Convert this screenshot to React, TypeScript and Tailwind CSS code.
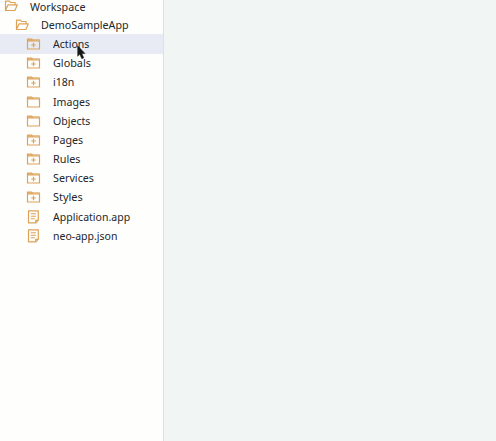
type Kind = "open" | "plus" | "folder" | "file";

interface Item {
  label: string;
  kind: Kind;
  indent: string;
  width: string;
  selected?: boolean;
}

const items: Item[] = [
  { label: "Workspace", kind: "open", indent: "pl-[4px]", width: "scale-x-[0.935]" },
  { label: "DemoSampleApp", kind: "open", indent: "pl-[15px]", width: "scale-x-[0.93]" },
  { label: "Actions", kind: "plus", indent: "pl-[26px]", width: "scale-x-[0.92]", selected: true },
  { label: "Globals", kind: "plus", indent: "pl-[26px]", width: "scale-x-[0.94]" },
  { label: "i18n", kind: "plus", indent: "pl-[26px]", width: "scale-x-[0.92]" },
  { label: "Images", kind: "folder", indent: "pl-[26px]", width: "scale-x-[0.92]" },
  { label: "Objects", kind: "folder", indent: "pl-[26px]", width: "scale-x-[0.92]" },
  { label: "Pages", kind: "plus", indent: "pl-[26px]", width: "scale-x-[0.93]" },
  { label: "Rules", kind: "plus", indent: "pl-[26px]", width: "scale-x-[0.94]" },
  { label: "Services", kind: "plus", indent: "pl-[26px]", width: "scale-x-[0.935]" },
  { label: "Styles", kind: "plus", indent: "pl-[26px]", width: "scale-x-[0.95]" },
  { label: "Application.app", kind: "file", indent: "pl-[26px]", width: "scale-x-[0.915]" },
  { label: "neo-app.json", kind: "file", indent: "pl-[26px]", width: "scale-x-[0.915]" },
];

function ItemIcon({ kind }: { kind: Kind }) {
  return (
    <svg
      viewBox="0 0 15 14"
      className="h-[14px] w-[15px] shrink-0 text-[#dda258]"
      fill="none"
      stroke="currentColor"
      strokeWidth="1.2"
      strokeLinejoin="round"
    >
      {kind === "open" && (
        <path d="M1.5 11.5V2.2h4l1 1.3h4.6v2.2M1.5 11.5l2.6-5.7h9.2L10.9 11.5H1.5Z" />
      )}
      {(kind === "plus" || kind === "folder") && (
        <>
          <path d="M1.5 3.9h12v8.1h-12Z" />
          <path d="M1.5 4V2.1h4.2l1 1.6" fill="currentColor" fillOpacity="0.55" />
          <path d="M6.2 2.6h7.3v1.3" strokeWidth="0.7" />
        </>
      )}
      {kind === "plus" && <path d="M7.5 5.7v4.6M5.2 8h4.6" />}
      {kind === "file" && (
        <>
          <path d="M2.5 .9h9.8v9.3l-2.4 2.7H2.5Z" />
          <path d="M9.7 12.6v-2.2h2.4M4.8 3.8h5.2M4.8 6.3h5.2M4.8 8.8h4" strokeWidth="1.1" />
        </>
      )}
    </svg>
  );
}

export default function App() {
  return (
    <div className="relative flex h-[441px] w-[496px] overflow-hidden bg-[#f1f5f4] font-['Noto_Sans',sans-serif]">
      <aside className="w-[164px] shrink-0 border-r border-[#dde0e6] bg-[#fefefd]">
        <ul>
          {items.map((item, index) => (
            <li
              key={item.label}
              className={`flex ${index === 0 ? "h-[15.2px] items-end pb-[2.5px]" : "h-[19.2px] items-center"} ${item.indent} ${item.selected ? "bg-[#e8ebf4]" : ""}`}
            >
              <ItemIcon kind={item.kind} />
              <span className={`${index < 2 ? "ml-[11px]" : "ml-3"} origin-left text-[11.5px] leading-[13px] whitespace-nowrap text-[#242628] ${index === 0 ? "" : "pb-px"} ${item.width}`}>
                {item.label}
              </span>
            </li>
          ))}
        </ul>
      </aside>
      <main className="flex-1" />
      <svg viewBox="0 0 9 15" className="absolute top-[45px] left-[77px] h-[15px] w-[9px]">
        <path d="M.7.7v10.6l2.1-2 2 4.5 2-1-2-4.2h3.2Z" fill="#171717" stroke="#171717" strokeWidth="0.5" />
      </svg>
    </div>
  );
}
